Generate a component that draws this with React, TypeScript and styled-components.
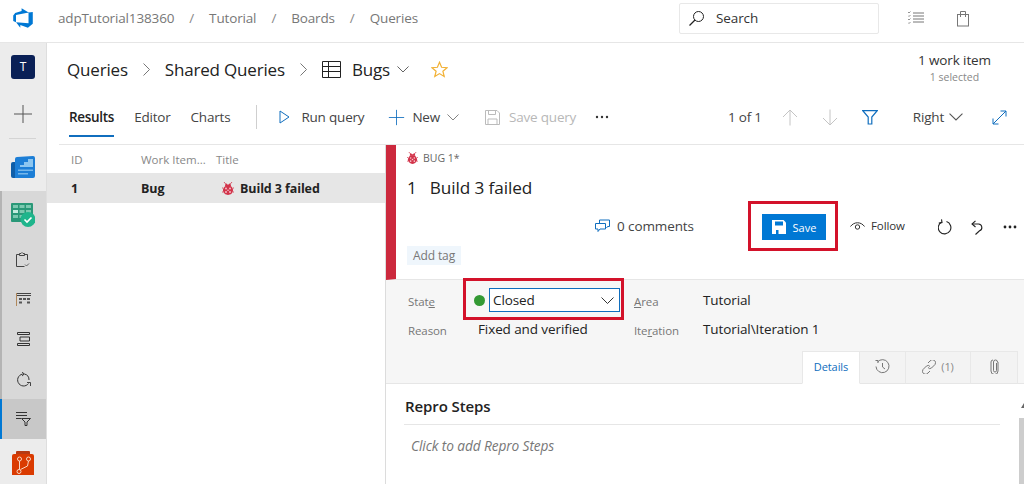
import React from "react";
import styled, { createGlobalStyle } from "styled-components";

const Global = createGlobalStyle`
  html, body { margin: 0; padding: 0; background: #fff; overflow: hidden; }
  body { font-family: "Open Sans", "Noto Sans", "Liberation Sans", sans-serif; color: #222; }
  * { box-sizing: border-box; }
  #root { width: 1024px; height: 484px; }
`;

const Page = styled.div`
  width: 1024px; height: 484px; display: flex; flex-direction: column; overflow: hidden; position: relative;
`;
const TopBar = styled.header`
  height: 43px; flex: none; display: flex; align-items: center; border-bottom: 1px solid #e6e6e6; padding: 0 0 6px 12px;
`;
const Crumbs = styled.nav`
  display: flex; align-items: center; margin-left: 24px; width: 621px; font-size: 13.500px; color: #777; letter-spacing: -0.15px;
`;
const Sep = styled.span`
  margin: 0 15px; color: #888;
`;
const SearchBox = styled.div`
  width: 200px; height: 31px; border: 1px solid #e8e8e8; border-radius: 2px; display: flex; align-items: center; gap: 11px;
  padding-left: 8px; font-size: 13.500px; color: #333; letter-spacing: -0.1px;
`;
const TopIcons = styled.div`
  display: flex; align-items: center; gap: 32px; margin-left: 29px; color: #777;
`;
const Body = styled.div`
  flex: 1; display: flex; min-height: 0;
`;
const Rail = styled.aside`
  width: 47px; flex: none; background: #ececec; border-right: 1px solid #dedede; display: flex; flex-direction: column; align-items: stretch;
`;
const RailItem = styled.div<{ $h: number; $active?: boolean; $group?: boolean; $top?: number }>`
  height: ${p => p.$h}px; flex: none; display: flex; align-items: center; justify-content: center;
  background: ${p => (p.$active ? "#c8c8c8" : p.$group ? "#d8d8d8" : "transparent")};
  border-left: 2px solid ${p => (p.$active ? "#0078d4" : p.$group ? "#b4b4b4" : "transparent")};
  padding-right: 2px; padding-top: ${p => p.$top ?? 0}px;
`;
const RailDivider = styled.div`
  height: 1px; flex: none; background: #d4d4d4; margin: 0 10px 0 9px;
`;
const Avatar = styled.div`
  width: 24px; height: 24px; border-radius: 3px; background: #0a2056; color: #fff; font-size: 12px; display: flex; align-items: center; justify-content: center;
`;
const Main = styled.main`
  flex: 1; min-width: 0; display: flex; flex-direction: column;
`;
const TitleRow = styled.div`
  height: 54px; flex: none; display: flex; align-items: center; padding: 0 33px 1px 20px; font-size: 17px; color: #222; letter-spacing: -0.18px;
`;
const TitleGlyph = styled.span<{ $l: number; $r: number }>`
  display: inline-flex; margin: 0 ${p => p.$r}px 0 ${p => p.$l}px;
`;
const Count = styled.div`
  margin-left: auto; text-align: center; line-height: 1; padding-bottom: 3px;
`;
const CountMain = styled.div`
  font-size: 13.500px; color: #333; letter-spacing: -0.1px; margin-bottom: 5px;
`;
const CountSub = styled.div`
  font-size: 10.500px; color: #888; letter-spacing: 0;
`;
const Toolbar = styled.div`
  height: 48px; flex: none; display: flex; align-items: center; margin-left: 12px; padding-bottom: 7px; border-bottom: 1px solid #e6e6e6;
  font-size: 13.500px; color: #444; letter-spacing: -0.2px;
`;
const Tab = styled.div<{ $active?: boolean }>`
  height: 40px; display: flex; align-items: center; margin-right: 20px; color: ${p => (p.$active ? "#222" : "#444")};
  font-weight: ${p => (p.$active ? 600 : 400)}; letter-spacing: ${p => (p.$active ? "-0.3px" : "-0.2px")};
  margin-left: ${p => (p.$active ? "10px" : "0")};
  border-bottom: 2px solid ${p => (p.$active ? "#106ebe" : "transparent")};
  border-top: 2px solid transparent;
`;
const ToolSep = styled.div`
  width: 1px; height: 24px; background: #cfcfcf; margin: 0 22px 0 6px;
`;
const ToolBtn = styled.div<{ $off?: boolean; $ml?: number; $gap?: number }>`
  display: flex; align-items: center; gap: ${p => p.$gap ?? 9}px; color: ${p => (p.$off ? "#b8b8b8" : "#444")};
  margin-left: ${p => p.$ml ?? 0}px; white-space: nowrap;
`;
const Spacer = styled.div`
  flex: 1;
`;
const Split = styled.div`
  flex: 1; display: flex; min-height: 0;
`;
const ListPane = styled.section`
  width: 339px; flex: none; border-right: 1px solid #dcdcdc;
`;
const ListRow = styled.div<{ $head?: boolean }>`
  height: ${p => (p.$head ? "28px" : "30px")}; display: grid; grid-template-columns: 70px 75px 1fr; align-items: center; padding-left: 24px;
  background: ${p => (p.$head ? "transparent" : "#e6e6e6")}; color: ${p => (p.$head ? "#888" : "#222")};
  font-size: ${p => (p.$head ? "11.500px" : "12.500px")}; font-weight: ${p => (p.$head ? 400 : 700)}; letter-spacing: ${p => (p.$head ? "0" : "-0.1px")};
`;
const TitleCell = styled.span`
  display: flex; align-items: center; gap: 6px; padding-left: 6px;
`;
const Detail = styled.section`
  flex: 1; min-width: 0; display: flex; flex-direction: column;
`;
const WorkHeader = styled.div`
  height: 135px; flex: none; border-left: 10px solid #cc293d; border-bottom: 1px solid #e6e6e6; padding: 6px 0 0 11px; display: flex; flex-direction: column;
`;
const TypeLine = styled.div`
  display: flex; align-items: center; gap: 5px; font-size: 10.500px; color: #666; height: 14px;
`;
const BigTitle = styled.div`
  font-size: 17.200px; color: #222; display: flex; gap: 13px; margin-top: 10px; height: 24px; align-items: center; letter-spacing: -0.1px;
`;
const ActionRow = styled.div`
  display: flex; align-items: center; margin-top: 15px; height: 26px; padding-left: 188px; font-size: 13.500px; color: #444; letter-spacing: -0.1px;
`;
const Comments = styled.div`
  display: flex; align-items: center; gap: 7px; width: 167px; white-space: nowrap; padding-bottom: 2px;
`;
const SaveBtn = styled.div`
  width: 64px; height: 26px; background: #0078d4; color: #fff; display: flex; align-items: center; justify-content: center; gap: 7px; font-size: 11px; letter-spacing: 0;
`;
const Follow = styled.div`
  display: flex; align-items: center; gap: 6px; margin-left: 24px; width: 88px; font-size: 11.500px; color: #333; letter-spacing: -0.1px; padding-bottom: 3px;
`;
const IconSlot = styled.span<{ $ml?: number }>`
  display: inline-flex; margin-left: ${p => p.$ml ?? 0}px;
`;
const TagChip = styled.div`
  align-self: flex-start; margin-top: 6px; height: 19px; width: 54px; justify-content: center; background: #eff6fc; color: #777; font-size: 12px; display: flex; align-items: center; letter-spacing: -0.1px;
`;
const FormArea = styled.div`
  height: 104px; flex: none; background: #f6f6f6; border-bottom: 1px solid #e6e6e6; display: flex; flex-direction: column; padding-top: 7px;
`;
const FieldGrid = styled.div`
  display: grid; grid-template-columns: 66px 160px 69px 1fr; grid-auto-rows: 29px; padding-left: 22px; align-items: center; height: 63px;
  font-size: 13.500px; color: #222; letter-spacing: -0.1px;
`;
const Label = styled.span`
  font-size: 11.500px; color: #777; letter-spacing: -0.1px; & u { text-underline-offset: 1px; }
`;
const Value = styled.span<{ $inset?: number }>`
  padding: 0 0 3px ${p => p.$inset ?? 0}px;
`;
const StateCell = styled.div`
  display: flex; align-items: center; gap: 4px; padding-bottom: 3px;
`;
const Dot = styled.span`
  width: 11px; height: 11px; border-radius: 50%; background: #339933; flex: none;
`;
const Select = styled.div`
  width: 131px; height: 24px; border: 1px solid #106ebe; background: #fff; display: flex; align-items: center; justify-content: space-between; padding: 0 5px 0 3px; font-size: 13.500px;
`;
const TabStrip = styled.div`
  display: flex; justify-content: flex-end; padding-right: 6px; margin-top: auto; height: 33px; margin-bottom: -1px;
`;
const FormTab = styled.div<{ $w: number; $active?: boolean }>`
  width: ${p => p.$w}px; display: flex; align-items: center; justify-content: center; gap: 5px;
  background: ${p => (p.$active ? "#fff" : "#f3f3f3")}; border: 1px solid #e8e8e8; border-left-width: ${p => (p.$active ? "1px" : "0")};
  border-bottom: ${p => (p.$active ? "1px solid #fff" : "1px solid #e6e6e6")};
  color: ${p => (p.$active ? "#106ebe" : "#888")}; font-size: 11px; letter-spacing: -0.1px; padding-bottom: 2px;
`;
const ReproArea = styled.div`
  flex: 1; padding: 13px 24px 0 18px; position: relative;
`;
const ReproTitle = styled.div`
  font-size: 15px; font-weight: 600; color: #222; height: 28px; border-bottom: 1px solid #e6e6e6; line-height: 19px; letter-spacing: -0.1px; padding-left: 1px;
`;
const ReproHint = styled.div`
  font-size: 13.700px; font-style: italic; color: #777; margin: 11px 0 0 7px; letter-spacing: -0.1px;
`;
const ScrollThumb = styled.div`
  position: absolute; right: 0; top: 34px; width: 5px; bottom: 0; background: #cdcdcd;
`;
const ScrollArrow = styled.div`
  position: absolute; right: 0; top: 19px; width: 0; height: 0; border-left: 3px solid transparent; border-bottom: 5px solid #666;
`;
const Callout = styled.div<{ $l: number; $t: number; $w: number; $h: number }>`
  position: absolute; left: ${p => p.$l}px; top: ${p => p.$t}px; width: ${p => p.$w}px; height: ${p => p.$h}px; border: 3px solid #d3122a; pointer-events: none;
`;

const S = { fill: "none", stroke: "currentColor", strokeWidth: 1 } as const;

const Logo = () => (
  <svg width="22" height="22" viewBox="0 0 18 18"><path fill="#0078d4" d="M17 4v9.74l-4 3.28-6.2-2.26V17l-3.51-4.59 10.23.8V4.44zm-3.41.49L7.85 1v2.29L2.58 4.84 1 6.87v4.61l2.26 1V6.57z"/></svg>
);
const SearchIcon = () => (
  <svg width="17" height="17" viewBox="0 0 17 17" {...S} color="#222"><circle cx="10.5" cy="6.5" r="5"/><path d="M7 10 1.5 15.5" strokeWidth="1.2"/></svg>
);
const ListCheck = () => (
  <svg width="16" height="14" viewBox="0 0 16 14" {...S}><path d="M5 2h11M5 5h11M5 8h11M5 11h11"/><path d="M0 1l1 1 1.5-1.5M0 4.500l1 1 1.5-1.5M0 8l1 1 1.500-1.500M0 11.500l1 1 1.500-1.500" strokeWidth=".8"/></svg>
);
const Bag = () => (
  <svg width="14" height="17" viewBox="0 0 14 17" {...S}><rect x="1.500" y="4.500" width="11" height="11.500"/><path d="M4.500 7V1.500h5V7"/></svg>
);
const OverviewIcon = () => (
  <svg width="24" height="22" viewBox="0 0 24 22">
    <path fill="#0f5ea8" d="M0 8a2 2 0 0 1 2-2h6v16H2a2 2 0 0 1-2-2z"/>
    <path fill="#1c7ed6" d="M4 3a2 2 0 0 1 2-2l16-1a2 2 0 0 1 2 2v18a2 2 0 0 1-2 2H4z"/>
    <path fill="#8cc6f0" d="M9 9h4V6h4V3h5v8H9z"/>
    <path fill="#8cc6f0" d="M7 13.500h15V15H7zM7 17h10v1.500H7z" opacity=".8"/>
  </svg>
);
const BoardsIcon = () => (
  <svg width="24" height="24" viewBox="0 0 24 24">
    <rect x="0" y="0" width="22" height="19" rx="1" fill="#2a9878"/>
    <path fill="#7cc9b0" d="M2 2h5v3H2zM8.500 2h5v3h-5zM15 2h5v3h-5zM8.500 7h5v3h-5zM15 7h5v3h-5zM2 12h5v3H2zM8.500 12h5v3h-5z"/>
    <path fill="#c4ecdf" d="M2 7h5v3H2z"/>
    <circle cx="17" cy="16.500" r="7.500" fill="#1fb58c"/>
    <path d="M13.500 16.500l2.500 2.500 4.500-4.500" fill="none" stroke="#fff" strokeWidth="1.600"/>
  </svg>
);
const ClipIcon = () => (
  <svg width="14" height="15" viewBox="0 0 14 15" fill="none" stroke="#444"><path d="M11.500 8V2.500H.5v12h8"/><path d="M3.500 3.500V1.500H5l1-1 1 1h1.500v2z" fill="#d8d8d8"/><path d="M9 12.500l1.500 1.500 2.500-2.500" strokeWidth=".8"/></svg>
);
const GridBoard = () => (
  <svg width="15" height="13" viewBox="0 0 15 13" fill="none"><path d="M0 .5h15M0 2.500h15" stroke="#444"/><path d="M.5 0v13" stroke="#b0885c"/><path fill="#555" d="M3 5h3v2H3zM7 5h3v2H7zM11 5h3v2h-3zM3 8.500h3v2H3zM11 8.500h3v2h-3z"/></svg>
);
const Backlog = () => (
  <svg width="13" height="14" viewBox="0 0 13 14" fill="none" stroke="#333"><path d="M.5.5h12v2H.5zM.5 11.500h12v2H.5zM3 5h9.500v4H3z"/></svg>
);
const Sprint = () => (
  <svg width="15" height="15" viewBox="0 0 15 15" fill="none" stroke="#333"><path d="M8 2a6 6 0 1 0 4.500 9.500"/><path d="M8.500 2A6 6 0 0 1 13 8"/><path d="M6 0 8.300 2 6 4" strokeWidth=".9"/><path d="M11 10.500h3.500v3.500" strokeWidth=".9"/></svg>
);
const QueryIcon = () => (
  <svg width="15" height="14" viewBox="0 0 15 14" fill="none" stroke="#333"><path d="M0 .5h11M0 3.500h11M0 6.500h5"/><path d="M5.500 6.500h9L11 10v3.500H9V10z"/></svg>
);
const ReposIcon = () => (
  <svg width="22" height="24" viewBox="0 0 22 24">
    <path fill="#b73a12" d="M4 1a1 1 0 0 1 1-1h12a1 1 0 0 1 1 1v3H4z"/><path fill="#da3b01" d="M0 5a2 2 0 0 1 2-2h18a2 2 0 0 1 2 2v19H0z"/>
    <g fill="none" stroke="#f7d7c4" strokeWidth="1"><circle cx="7.500" cy="8" r="2"/><circle cx="16.500" cy="8" r="2"/><circle cx="7" cy="20.500" r="2"/><path d="M7.500 10v8.500M8.500 18.500l7-3.500 1-5"/></g>
  </svg>
);
const Plus = ({ size = 20, color = "#555" }: { size?: number; color?: string }) => (
  <svg width={size} height={size} viewBox="0 0 20 20" fill="none" stroke={color}><path d="M10 1v18M1 10h18"/></svg>
);
const Chevron = ({ color = "#555", w = 13 }: { color?: string; w?: number }) => (
  <svg width={w} height={(w * 7) / 13} viewBox="0 0 13 7" fill="none" stroke={color}><path d="M.5.5 6.500 6.500 12.500.5"/></svg>
);
const ChevRight = () => (
  <svg width="7" height="13" viewBox="0 0 7 13" fill="none" stroke="#777"><path d="M.5.500 6.500 6.500.5 12.500"/></svg>
);
const Table = () => (
  <svg width="19" height="17" viewBox="0 0 19 17" fill="none" stroke="#222"><path d="M.5.500h18v16H.5zM.5 5.500h18M.5 10.500h18M6.500.500v16"/></svg>
);
const Star = () => (
  <svg width="17" height="17" viewBox="0 0 17 17" fill="none" stroke="#f2b135" strokeWidth="1.200"><path d="M8.500 1.300 10.600 6.300 16 6.700 11.900 10.200 13.200 15.500 8.500 12.600 3.800 15.500 5.100 10.200 1 6.700 6.400 6.300z"/></svg>
);
const Play = () => (
  <svg width="11" height="14" viewBox="0 0 11 14" fill="none" stroke="#106ebe"><path d="M1 1l9 6-9 6z"/></svg>
);
const Disk = () => (
  <svg width="15" height="15" viewBox="0 0 15 15" fill="none" stroke="#bbb"><path d="M.5.500h11.500l2.500 2.500v11.500H.5zM3.500.500v4h7v-4M3 14.500V9h9v5.500"/></svg>
);
const SaveGlyph = () => (
  <svg width="14" height="14" viewBox="0 0 14 14"><path fill="#fff" d="M0 0h11.500L14 2.500V14H0z"/><path fill="#0078d4" d="M3 1.500h8v4H3zM4 10h2.500v4H4z"/></svg>
);
const Arrow = ({ up }: { up?: boolean }) => (
  <svg width="16" height="17" viewBox="0 0 16 17" fill="none" stroke="#c4c4c4"><path d={up ? "M8 16.500V1M1 8l7-7 7 7" : "M8 .5V16M1 9l7 7 7-7"}/></svg>
);
const Funnel = () => (
  <svg width="16" height="15" viewBox="0 0 16 15" fill="none" stroke="#106ebe" strokeWidth="1.200"><path d="M.8.700h14.400L9.800 7v7H6.200V7z"/></svg>
);
const Expand = () => (
  <svg width="15" height="15" viewBox="0 0 15 15" fill="none" stroke="#106ebe"><path d="M1 14 14 1M8.500 1h5.500v5.500M1 8.500V14h5.500"/></svg>
);
const Bug = ({ size = 12 }: { size?: number }) => (
  <svg width={size} height={(size * 13) / 12} viewBox="0 0 12 13">
    <path fill="#d2334a" d="M6 3.500c3 0 5 2 5 4.800S8.500 13 6 13 1 11 1 8.300 3 3.500 6 3.500z"/>
    <path fill="#d2334a" d="M3.500 1.500h1L5.300 2.500h1.400L7.500 1.500h1L9 4H3z"/>
    <path d="M2 0l1.500 1.800M10 0 8.500 1.800" stroke="#d2334a" strokeWidth=".8"/>
    <path d="M1 6H0M11 6h1M1 10H0M11 10h1" stroke="#d2334a" strokeWidth=".8"/>
    <circle cx="4" cy="6.500" r=".9" fill="#f7c9cf"/><circle cx="8" cy="6.500" r=".9" fill="#f7c9cf"/><circle cx="4" cy="10" r=".9" fill="#f7c9cf"/><circle cx="8" cy="10" r=".9" fill="#f7c9cf"/><circle cx="6" cy="8.300" r=".8" fill="#f7c9cf"/>
  </svg>
);
const CommentIcon = () => (
  <svg width="15" height="14" viewBox="0 0 15 14" fill="none" stroke="#106ebe"><path d="M4.500 4.500V1h10v6.500h-2l-1 1.500"/><path d="M.5 4.500h10V10H5l-2 2.500V10H.5z"/></svg>
);
const Eye = () => (
  <svg width="15" height="10" viewBox="0 0 15 10" fill="none" stroke="#333"><path d="M.5 5.500C4 .5 11 .5 14.500 5.500"/><circle cx="7.500" cy="6" r="2.200"/></svg>
);
const Refresh = () => (
  <svg width="15" height="16" viewBox="0 0 15 16" fill="none" stroke="#222" strokeWidth="1.100"><path d="M8.500 2.600a6.300 6.300 0 1 1-4.800 .4"/><path d="M3.500 .3 4 3.500l-3.200.6"/></svg>
);
const Undo = () => (
  <svg width="12" height="15" viewBox="0 0 12 15" fill="none" stroke="#222" strokeWidth="1.100"><path d="M4.500.8 1 4l3.500 3"/><path d="M1 4h6.500a3.500 3.500 0 0 1 1 6.800L4.500 14.500"/></svg>
);
const Dots = ({ color = "#333", r = 1.2 }: { color?: string; r?: number }) => (
  <svg width="14" height="4" viewBox="0 0 14 4" fill={color}><circle cx="2" cy="2" r={r}/><circle cx="7" cy="2" r={r}/><circle cx="12" cy="2" r={r}/></svg>
);
const History = () => (
  <svg width="15" height="15" viewBox="0 0 15 15" fill="none" stroke="#777"><path d="M2.500 3a6.500 6.500 0 1 1-1.500 4.500"/><path d="M.5 1.500h2.500V4M7.500 4v4l2.500 2"/></svg>
);
const LinkIcon = () => (
  <svg width="14" height="14" viewBox="0 0 14 14" fill="none" stroke="#777"><path d="M6 3l2-2a3 3 0 0 1 5 3.500l-3.500 3.500a2.500 2.500 0 0 1-3.500-.5M8 11l-2 2a3 3 0 0 1-5-3.500l3.500-3.500a2.500 2.500 0 0 1 3.500.5"/></svg>
);
const Clip = () => (
  <svg width="9" height="15" viewBox="0 0 9 15" fill="none" stroke="#777"><path d="M6.500 4v7.500a1.500 1.500 0 0 1-3 0V3a2 2 0 0 1 4 0h.5v9a3.500 3.500 0 0 1-7 0V3a2 2 0 0 1 2-2"/></svg>
);

export default function App() {
  return (
    <Page>
      <Global />
      <TopBar>
        <Logo />
        <Crumbs>
          <span>adpTutorial138360</span><Sep>/</Sep><span>Tutorial</span><Sep>/</Sep><span>Boards</span><Sep>/</Sep><span>Queries</span>
        </Crumbs>
        <SearchBox><SearchIcon />Search</SearchBox>
        <TopIcons><ListCheck /><Bag /></TopIcons>
      </TopBar>
      <Body>
        <Rail>
          <RailItem $h={47}><Avatar>T</Avatar></RailItem>
          <RailItem $h={48}><Plus /></RailItem>
          <RailDivider />
          <RailItem $h={52} $top={4}><OverviewIcon /></RailItem>
          <RailItem $h={48} $group><BoardsIcon /></RailItem>
          <RailItem $h={40} $group><ClipIcon /></RailItem>
          <RailItem $h={40} $group><GridBoard /></RailItem>
          <RailItem $h={40} $group><Backlog /></RailItem>
          <RailItem $h={40} $group><Sprint /></RailItem>
          <RailItem $h={40} $active><QueryIcon /></RailItem>
          <RailItem $h={45} $top={3}><ReposIcon /></RailItem>
        </Rail>
        <Main>
          <TitleRow>
            <span>Queries</span><TitleGlyph $l={15} $r={15}><ChevRight /></TitleGlyph>
            <span>Shared Queries</span><TitleGlyph $l={15} $r={15}><ChevRight /></TitleGlyph>
            <Table />
            <TitleGlyph $l={11} $r={0}>Bugs</TitleGlyph>
            <TitleGlyph $l={7} $r={0}><Chevron w={12} /></TitleGlyph>
            <TitleGlyph $l={22} $r={0}><Star /></TitleGlyph>
            <Count><CountMain>1 work item</CountMain><CountSub>1 selected</CountSub></Count>
          </TitleRow>
          <Toolbar>
            <Tab $active>Results</Tab>
            <Tab>Editor</Tab>
            <Tab>Charts</Tab>
            <ToolSep />
            <ToolBtn $gap={11}><Play />Run query</ToolBtn>
            <ToolBtn $ml={24} $gap={7}><Plus size={17} color="#106ebe" />New<Chevron color="#777" w={12} /></ToolBtn>
            <ToolBtn $off $ml={26}><Disk />Save query</ToolBtn>
            <ToolBtn $ml={19}><Dots /></ToolBtn>
            <Spacer />
            <ToolBtn>1 of 1</ToolBtn>
            <ToolBtn $ml={20}><Arrow up /></ToolBtn>
            <ToolBtn $ml={24}><Arrow /></ToolBtn>
            <ToolBtn $ml={24}><Funnel /></ToolBtn>
            <ToolBtn $ml={35} $gap={5}>Right<Chevron color="#555" w={14} /></ToolBtn>
            <ToolBtn $ml={29}><Expand /></ToolBtn>
            <ToolBtn $ml={17} />
          </Toolbar>
          <Split>
            <ListPane>
              <ListRow $head><span>ID</span><span>Work Item...</span><span>Title</span></ListRow>
              <ListRow><span>1</span><span>Bug</span><TitleCell><Bug />Build 3 failed</TitleCell></ListRow>
            </ListPane>
            <Detail>
              <WorkHeader>
                <TypeLine><Bug size={11} />BUG 1*</TypeLine>
                <BigTitle><span>1</span><span>Build 3 failed</span></BigTitle>
                <ActionRow>
                  <Comments><CommentIcon />0 comments</Comments>
                  <SaveBtn><SaveGlyph />Save</SaveBtn>
                  <Follow><Eye />Follow</Follow>
                  <IconSlot><Refresh /></IconSlot>
                  <IconSlot $ml={18}><Undo /></IconSlot>
                  <IconSlot $ml={20}><Dots color="#222" r={1.4} /></IconSlot>
                </ActionRow>
                <TagChip>Add tag</TagChip>
              </WorkHeader>
              <FormArea>
                <FieldGrid>
                  <Label>Stat<u>e</u></Label>
                  <StateCell><Dot /><Select>Closed<Chevron color="#333" w={13} /></Select></StateCell>
                  <Label><u>A</u>rea</Label>
                  <Value>Tutorial</Value>
                  <Label>Reason</Label>
                  <Value $inset={4}>Fixed and verified</Value>
                  <Label>Ite<u>r</u>ation</Label>
                  <Value>Tutorial\Iteration 1</Value>
                </FieldGrid>
                <TabStrip>
                  <FormTab $w={58} $active>Details</FormTab>
                  <FormTab $w={46}><History /></FormTab>
                  <FormTab $w={65}><LinkIcon />(1)</FormTab>
                  <FormTab $w={47}><Clip /></FormTab>
                </TabStrip>
              </FormArea>
              <ReproArea>
                <ReproTitle>Repro Steps</ReproTitle>
                <ReproHint>Click to add Repro Steps</ReproHint>
                <ScrollArrow />
                <ScrollThumb />
              </ReproArea>
            </Detail>
          </Split>
        </Main>
      </Body>
      <Callout $l={748} $t={201} $w={90} $h={50} />
      <Callout $l={463} $t={278} $w={161} $h={42} />
    </Page>
  );
}
